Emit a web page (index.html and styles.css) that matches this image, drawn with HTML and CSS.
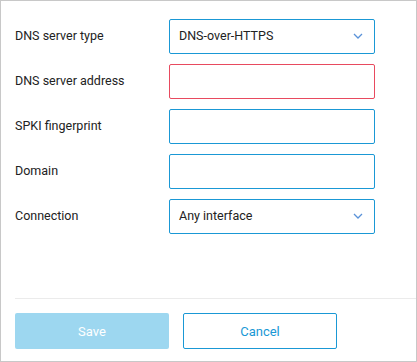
FILE: index.html
```html
<!DOCTYPE html>
<html lang="en">

<head>
  <meta charset="UTF-8">
  <meta name="viewport" content="width=device-width, initial-scale=1">
  <title>DNS server</title>
  <link rel="stylesheet" href="styles.css">
</head>

<body>

  <div class="dialog">
    <div class="form">
      <label class="label">DNS server type</label>
      <div class="field select">
        <span>DNS-over-HTTPS</span>
        <svg class="chevron" width="10" height="6" viewBox="0 0 10 6"><path d="M1 1l4 4 4-4" fill="none" stroke="#5a92d8" stroke-width="1.3"/></svg>
      </div>

      <label class="label">DNS server address</label>
      <div class="field invalid"></div>

      <label class="label">SPKI fingerprint</label>
      <div class="field"></div>

      <label class="label">Domain</label>
      <div class="field"></div>

      <label class="label">Connection</label>
      <div class="field select">
        <span>Any interface</span>
        <svg class="chevron" width="10" height="6" viewBox="0 0 10 6"><path d="M1 1l4 4 4-4" fill="none" stroke="#5a92d8" stroke-width="1.3"/></svg>
      </div>
    </div>

    <div class="footer">
      <button class="btn btn-save" disabled>Save</button>
      <button class="btn btn-cancel">Cancel</button>
    </div>
  </div>

</body>

</html>
```

FILE: styles.css
```css
* {
  margin: 0;
  padding: 0;
  box-sizing: border-box;
}

body {
  background: #fff;
  font-family: Roboto, 'Liberation Sans', sans-serif;
  color: #222;
}

.dialog {
  width: 417px;
  height: 362px;
  border: 1px solid #c8c8c8;
  display: flex;
  flex-direction: column;
}

.form {
  flex: 1;
  display: grid;
  grid-template-columns: 154px 206px;
  grid-auto-rows: 35px;
  row-gap: 10px;
  align-items: center;
  align-content: start;
  padding: 18px 0 0 14px;
}

.label {
  font-size: 12.5px;
  padding-bottom: 2px;
}

.field {
  height: 35px;
  border: 1px solid #1a98d5;
  border-radius: 2px;
  background: #fff;
}

.field.invalid {
  border-color: #e84a5f;
}

.select {
  display: flex;
  align-items: center;
  justify-content: space-between;
  padding: 0 11px 2px 9px;
  font-size: 12.5px;
}

.chevron {
  display: block;
}

.footer {
  margin-left: 14px;
  border-top: 1px solid #ebebeb;
  padding: 14px 0 12px;
  display: flex;
  gap: 14px;
}

.btn {
  width: 154px;
  height: 36px;
  border-radius: 2px;
  font-family: inherit;
  font-size: 13px;
}

.btn-save {
  background: #9dd7f0;
  border: none;
  color: #fff;
}

.btn-cancel {
  background: #fff;
  border: 1px solid #1a98d5;
  color: #1a98d5;
  cursor: pointer;
}
```
